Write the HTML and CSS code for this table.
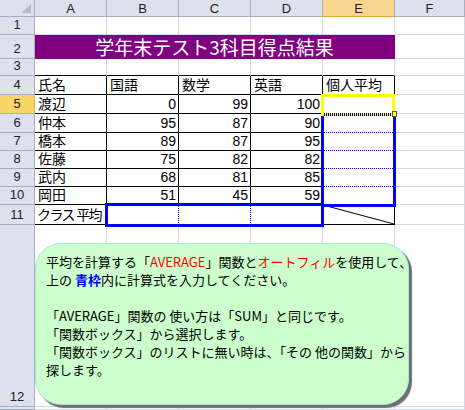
FILE: index.html
```html
<!DOCTYPE html>
<html lang="ja">
<head>
<meta charset="utf-8">
<title>学年末テスト</title>
<link rel="stylesheet" href="styles.css">
</head>
<body>
<div class="sheet">
  <div class="corner"><svg class="tri" width="10" height="9" viewBox="0 0 10 9"><polygon points="10,0 10,9 0,9" fill="#b4bac6"/></svg></div>
  <div class="ch">A</div><div class="ch">B</div><div class="ch">C</div><div class="ch">D</div><div class="ch ch-sel">E</div><div class="ch">F</div>

  <div class="rh">1</div><div class="c"></div><div class="c"></div><div class="c"></div><div class="c"></div><div class="c"></div><div class="c"></div>

  <div class="rh">2</div><div class="c title">学年末テスト3科目得点結果</div><div class="c"></div>

  <div class="rh">3</div><div class="c tb"></div><div class="c tb"></div><div class="c tb"></div><div class="c tb"></div><div class="c tb"></div><div class="c"></div>

  <div class="rh">4</div><div class="c t">氏名</div><div class="c t">国語</div><div class="c t">数学</div><div class="c t">英語</div><div class="c t">個人平均</div><div class="c"></div>

  <div class="rh rh-sel">5</div><div class="c t">渡辺</div><div class="c t n">0</div><div class="c t n">99</div><div class="c t n">100</div><div class="c t"></div><div class="c"></div>

  <div class="rh">6</div><div class="c t">仲本</div><div class="c t n">95</div><div class="c t n">87</div><div class="c t n">90</div><div class="c t bd"></div><div class="c"></div>

  <div class="rh">7</div><div class="c t">橋本</div><div class="c t n">89</div><div class="c t n">87</div><div class="c t n">95</div><div class="c t bd"></div><div class="c"></div>

  <div class="rh">8</div><div class="c t">佐藤</div><div class="c t n">75</div><div class="c t n">82</div><div class="c t n">82</div><div class="c t bd"></div><div class="c"></div>

  <div class="rh">9</div><div class="c t">武内</div><div class="c t n">68</div><div class="c t n">81</div><div class="c t n">85</div><div class="c t bd"></div><div class="c"></div>

  <div class="rh">10</div><div class="c t">岡田</div><div class="c t n">51</div><div class="c t n">45</div><div class="c t n">59</div><div class="c t"></div><div class="c"></div>

  <div class="rh">11</div><div class="c t tight">クラス 平均</div><div class="c t br"></div><div class="c t br"></div><div class="c t"></div><div class="c t diag"><svg width="100%" height="100%" viewBox="0 0 71 19" preserveAspectRatio="none"><line x1="0" y1="0" x2="71" y2="19" stroke="#000" stroke-width="1"/></svg></div><div class="c"></div>

  <div class="rh">12</div><div class="c"></div><div class="c"></div><div class="c"></div><div class="c"></div><div class="c"></div><div class="c"></div>

  <div class="rh"></div><div class="c"></div><div class="c"></div><div class="c"></div><div class="c"></div><div class="c"></div><div class="c"></div>

  <div class="blue blue-e"></div>
  <div class="blue blue-b"></div>
  <div class="sel"><div class="ants"></div></div>
  <div class="handle"></div>

  <div class="note">
    平均を計算する「<span class="red">AVERAGE</span>」関数と<span class="red">オートフィル</span>を使用して、<br>
    上の <span class="blu">青枠</span>内に計算式を入力してください。<br>
    <br>
    「AVERAGE」関数の 使い方は「SUM」と同じです。<br>
    「関数ボックス」から選択します。<br>
    「関数ボックス」のリストに無い時は、「その 他の関数」から<br>
    探します。
  </div>
</div>
</body>
</html>
```

FILE: styles.css
```css
* { box-sizing: border-box; margin: 0; padding: 0; }
html, body { width: 465px; height: 410px; overflow: hidden; background: #fff; }
body { font-family: "Liberation Sans", "Noto Sans CJK JP", sans-serif; color: #000; }

.sheet {
  position: relative;
  width: 465px;
  height: 410px;
  display: grid;
  grid-template-columns: 35px repeat(5, 72px) 1fr;
  grid-template-rows: 17px 18px 24px 17px 19px 19px 19px 18px 18px 18px 18px 20px 182px 1fr;
}

.corner, .ch, .rh {
  background: #dce1ec;
  border-right: 1px solid #a7b0c2;
  border-bottom: 1px solid #a7b0c2;
  font-size: 13px;
  color: #222;
  display: flex;
  justify-content: center;
}
.corner { position: relative; }
.tri { position: absolute; right: 3px; bottom: 3px; }
.ch { align-items: center; }
.rh { align-items: flex-end; line-height: 16px; padding-bottom: 1px; }
.ch-sel { background: #f8d690; border-bottom-color: #e9a43c; }
.rh-sel { background: #f8d469; border-right-color: #e9a43c; }

.c {
  border-right: 1px solid #d3d9e3;
  border-bottom: 1px solid #d3d9e3;
  font-size: 14px;
  line-height: 16px;
  display: flex;
  align-items: flex-end;
  padding: 0 2px 1px 3px;
  white-space: nowrap;
  overflow: hidden;
}
.n { justify-content: flex-end; }
.t { border-right-color: #000; border-bottom-color: #000; }
.tb { border-bottom-color: #000; }
.bd { border-bottom: 1px dotted #0000ff; }
.br { border-right: 1px dotted #0000ff; }
.tight { letter-spacing: -1.6px; padding-left: 2px; }
.diag { padding: 0; }
.diag svg { display: block; }

.title {
  grid-column: 2 / span 5;
  background: #800080;
  border-color: #800080;
  color: #fff;
  font-family: "Noto Sans CJK JP", sans-serif;
  font-size: 19px;
  line-height: 23px;
  justify-content: center;
  align-items: center;
  padding: 0;
  overflow: visible;
}

.blue { position: absolute; border: 3px solid #0000ff; }
.blue-e { left: 321px; top: 113px; width: 75px; height: 94px; }
.blue-b { left: 105px; top: 203px; width: 219px; height: 24px; }

.sel {
  position: absolute;
  left: 321px; top: 94px; width: 74px; height: 22px;
  border: 3px solid #ffff00;
  border-bottom: 0;
}
.ants {
  position: absolute;
  left: 0; right: 0; bottom: 0; height: 3px;
  background: repeating-linear-gradient(90deg, #000 0 1px, #ffff00 1px 2px);
}
.handle {
  position: absolute;
  left: 392px; top: 111px; width: 5px; height: 6px;
  background: #ffff00;
  border: 1px solid #555;
}

.note {
  position: absolute;
  left: 35px; top: 243px; width: 374px; height: 162px;
  background: #ccffcc;
  border: 1px solid #a6e6df;
  border-radius: 26px;
  box-shadow: 3px 3px 1px #6e6e6e;
  padding: 9px 0 0 10px;
  font-family: "Noto Sans CJK JP", sans-serif;
  font-size: 13px;
  line-height: 18px;
  white-space: nowrap;
}
.red { color: #ff0000; }
.blu { color: #0000ff; font-weight: bold; }
```
